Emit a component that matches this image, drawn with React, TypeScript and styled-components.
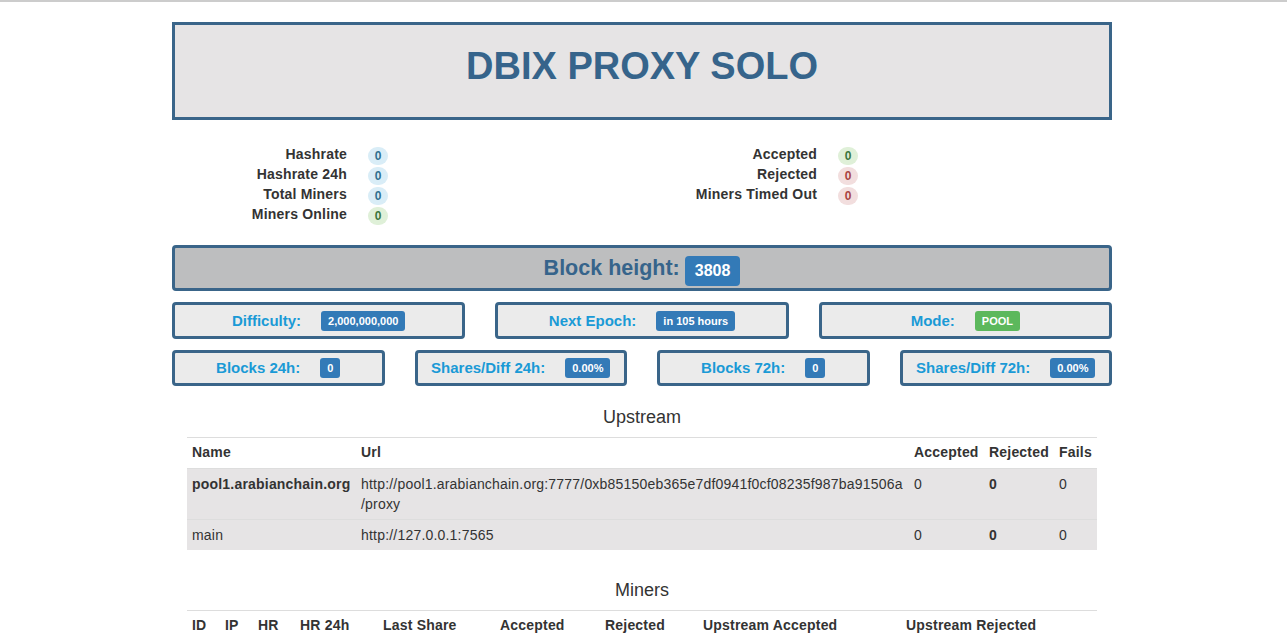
import React from "react";
import styled, { createGlobalStyle } from "styled-components";

const GlobalStyle = createGlobalStyle`
  html, body {
    margin: 0;
    padding: 0;
    background: #ffffff;
  }
  body {
    font-family: "Liberation Sans", Arial, Helvetica, sans-serif;
    font-size: 14px;
    line-height: 20px;
    letter-spacing: 0.2px;
    color: #333333;
  }
  * { box-sizing: border-box; }
`;

const TopRule = styled.div`
  height: 2px;
  background: #cccccc;
`;

const Container = styled.div`
  width: 940px;
  margin-left: calc(50% - 471.5px);
`;

const Header = styled.header`
  margin-top: 20px;
  height: 98px;
  border: 3px solid #3a6589;
  background: #e6e4e5;
  display: flex;
  justify-content: center;
`;

const Title = styled.h1`
  margin: 21px 0 0;
  font-size: 38px;
  line-height: 1.1;
  font-weight: 700;
  letter-spacing: 0;
  color: #36648b;
`;

const StatsGrid = styled.div`
  margin-top: 24px;
  margin-bottom: 21px;
  display: grid;
  grid-template-columns: 1fr 1fr;
`;

const StatList = styled.dl`
  margin: 0;
  padding: 0 15px;
  display: grid;
  grid-template-columns: 160px 1fr;
  grid-auto-rows: 20px;
  column-gap: 20px;
`;

const StatLabel = styled.dt`
  text-align: right;
  font-weight: 700;
  white-space: nowrap;
`;

const StatValue = styled.dd`
  margin: 0;
  display: flex;
  align-items: flex-start;
  padding-left: 1px;
  padding-top: 3px;
`;

type Tone = "info" | "success" | "danger";
const toneBg: Record<Tone, string> = { info: "#d9edf7", success: "#dff0d8", danger: "#f2dede" };
const toneFg: Record<Tone, string> = { info: "#31708f", success: "#3c763d", danger: "#a94442" };

const Pill = styled.span<{ $tone: Tone }>`
  display: inline-block;
  min-width: 20px;
  height: 18px;
  padding: 0 6px;
  border-radius: 10px;
  font-size: 12px;
  font-weight: 700;
  line-height: 18px;
  letter-spacing: 0;
  text-align: center;
  background: ${(p) => toneBg[p.$tone]};
  color: ${(p) => toneFg[p.$tone]};
`;

const BlockBar = styled.div`
  height: 46px;
  margin-bottom: 11px;
  border: 3px solid #3a6589;
  border-radius: 4px;
  background: #bdbebf;
  display: flex;
  align-items: center;
  justify-content: center;
  gap: 5px;
`;

const BlockLabel = styled.span`
  font-size: 21.5px;
  font-weight: 700;
  letter-spacing: 0;
  color: #36648b;
  line-height: 30px;
`;

const BigBadge = styled.span`
  display: inline-block;
  height: 30px;
  padding: 0 10px;
  border-radius: 4px;
  background: #337ab7;
  color: #ffffff;
  font-size: 16px;
  font-weight: 700;
  letter-spacing: 0;
  line-height: 30px;
  margin-top: 6px;
`;

const BoxRow = styled.div<{ $cols: number; $gapBelow: number }>`
  display: grid;
  grid-template-columns: repeat(${(p) => p.$cols}, 1fr);
  column-gap: 30px;
  margin-bottom: ${(p) => p.$gapBelow}px;
`;

const InfoBox = styled.div<{ $h: number }>`
  height: ${(p) => p.$h}px;
  border: 3px solid #3a6589;
  border-radius: 4px;
  background: #ebebeb;
  display: flex;
  align-items: center;
  justify-content: center;
  gap: 20px;
`;

const InfoLabel = styled.span`
  font-size: 15px;
  font-weight: 700;
  letter-spacing: 0;
  color: #1a9ad6;
  white-space: nowrap;
`;

const SmallBadge = styled.span<{ $green?: boolean }>`
  display: inline-block;
  height: 20px;
  padding: 0 7px;
  border-radius: 3px;
  background: ${(p) => (p.$green ? "#5cb85c" : "#337ab7")};
  color: #ffffff;
  font-size: 11px;
  font-weight: 700;
  letter-spacing: 0;
  line-height: 20px;
  white-space: nowrap;
`;

const SectionTitle = styled.h4<{ $top: number; $bottom: number }>`
  margin: ${(p) => p.$top}px 0 ${(p) => p.$bottom}px;
  font-size: 18px;
  font-weight: 400;
  line-height: 20px;
  letter-spacing: 0;
  text-align: center;
  color: #333333;
`;

const TableWrap = styled.div`
  padding: 0 15px;
`;

const Table = styled.table`
  width: 100%;
  table-layout: fixed;
  border-collapse: collapse;
  border-spacing: 0;
  margin-bottom: 20px;
`;

const Col = styled.col<{ $w: number }>`
  width: ${(p) => p.$w}px;
`;

const Th = styled.th`
  padding: 4px 5px 6px;
  text-align: left;
  font-weight: 700;
  border-top: 1px solid #dddddd;
  white-space: nowrap;
  vertical-align: top;
`;

const Tr = styled.tr`
  background: #e6e4e5;
`;

const Td = styled.td<{ $bold?: boolean }>`
  padding: 5px;
  border-top: 1px solid #dddddd;
  vertical-align: top;
  font-weight: ${(p) => (p.$bold ? 700 : 400)};
`;

const upstreams = [
  {
    name: "pool1.arabianchain.org",
    bold: true,
    url: "http://pool1.arabianchain.org:7777/0xb85150eb365e7df0941f0cf08235f987ba91506a",
    urlTail: "/proxy",
  },
  { name: "main", bold: false, url: "http://127.0.0.1:7565", urlTail: "" },
];

const minerCols: [string, number][] = [
  ["ID", 33],
  ["IP", 33],
  ["HR", 42],
  ["HR 24h", 83],
  ["Last Share", 117],
  ["Accepted", 105],
  ["Rejected", 98],
  ["Upstream Accepted", 203],
  ["Upstream Rejected", 196],
];

export default function App() {
  return (
    <>
      <GlobalStyle />
      <TopRule />
      <Container>
        <Header>
          <Title>DBIX PROXY SOLO</Title>
        </Header>

        <StatsGrid>
          <StatList>
            <StatLabel>Hashrate</StatLabel>
            <StatValue><Pill $tone="info">0</Pill></StatValue>
            <StatLabel>Hashrate 24h</StatLabel>
            <StatValue><Pill $tone="info">0</Pill></StatValue>
            <StatLabel>Total Miners</StatLabel>
            <StatValue><Pill $tone="info">0</Pill></StatValue>
            <StatLabel>Miners Online</StatLabel>
            <StatValue><Pill $tone="success">0</Pill></StatValue>
          </StatList>
          <StatList>
            <StatLabel>Accepted</StatLabel>
            <StatValue><Pill $tone="success">0</Pill></StatValue>
            <StatLabel>Rejected</StatLabel>
            <StatValue><Pill $tone="danger">0</Pill></StatValue>
            <StatLabel>Miners Timed Out</StatLabel>
            <StatValue><Pill $tone="danger">0</Pill></StatValue>
          </StatList>
        </StatsGrid>

        <BlockBar>
          <BlockLabel>Block height:</BlockLabel>
          <BigBadge>3808</BigBadge>
        </BlockBar>

        <BoxRow $cols={3} $gapBelow={11}>
          <InfoBox $h={37}>
            <InfoLabel>Difficulty:</InfoLabel>
            <SmallBadge>2,000,000,000</SmallBadge>
          </InfoBox>
          <InfoBox $h={37}>
            <InfoLabel>Next Epoch:</InfoLabel>
            <SmallBadge>in 105 hours</SmallBadge>
          </InfoBox>
          <InfoBox $h={37}>
            <InfoLabel>Mode:</InfoLabel>
            <SmallBadge $green>POOL</SmallBadge>
          </InfoBox>
        </BoxRow>

        <BoxRow $cols={4} $gapBelow={0}>
          <InfoBox $h={36}>
            <InfoLabel>Blocks 24h:</InfoLabel>
            <SmallBadge>0</SmallBadge>
          </InfoBox>
          <InfoBox $h={36}>
            <InfoLabel>Shares/Diff 24h:</InfoLabel>
            <SmallBadge>0.00%</SmallBadge>
          </InfoBox>
          <InfoBox $h={36}>
            <InfoLabel>Blocks 72h:</InfoLabel>
            <SmallBadge>0</SmallBadge>
          </InfoBox>
          <InfoBox $h={36}>
            <InfoLabel>Shares/Diff 72h:</InfoLabel>
            <SmallBadge>0.00%</SmallBadge>
          </InfoBox>
        </BoxRow>

        <SectionTitle $top={21} $bottom={10}>Upstream</SectionTitle>
        <TableWrap>
          <Table>
            <colgroup>
              <Col $w={169} />
              <Col $w={553} />
              <Col $w={75} />
              <Col $w={70} />
              <Col $w={43} />
            </colgroup>
            <thead>
              <tr>
                <Th>Name</Th>
                <Th>Url</Th>
                <Th>Accepted</Th>
                <Th>Rejected</Th>
                <Th>Fails</Th>
              </tr>
            </thead>
            <tbody>
              {upstreams.map((u) => (
                <Tr key={u.name}>
                  <Td $bold={u.bold}>{u.name}</Td>
                  <Td>
                    {u.url}
                    {u.urlTail && (
                      <>
                        <wbr />
                        {u.urlTail}
                      </>
                    )}
                  </Td>
                  <Td>0</Td>
                  <Td $bold>0</Td>
                  <Td>0</Td>
                </Tr>
              ))}
            </tbody>
          </Table>
        </TableWrap>

        <SectionTitle $top={30} $bottom={10}>Miners</SectionTitle>
        <TableWrap>
          <Table>
            <colgroup>
              {minerCols.map(([name, w]) => (
                <Col key={name} $w={w} />
              ))}
            </colgroup>
            <thead>
              <tr>
                {minerCols.map(([name]) => (
                  <Th key={name}>{name}</Th>
                ))}
              </tr>
            </thead>
            <tbody />
          </Table>
        </TableWrap>
      </Container>
    </>
  );
}
